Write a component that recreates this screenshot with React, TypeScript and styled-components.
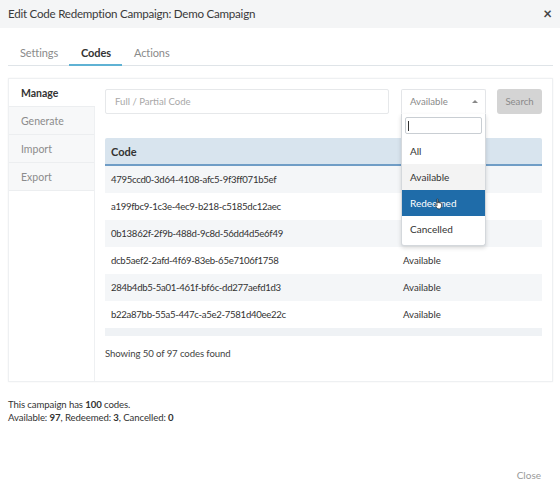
import styled, { createGlobalStyle } from "styled-components";

const GlobalStyle = createGlobalStyle`
  body {
    margin: 0;
    background: #fff;
    font-family: "Lato", "Open Sans", sans-serif;
    color: #333;
  }
`;

interface CodeRow {
  code: string;
  status: string;
}

const rows: CodeRow[] = [
  { code: "4795ccd0-3d64-4108-afc5-9f3ff071b5ef", status: "Available" },
  { code: "a199fbc9-1c3e-4ec9-b218-c5185dc12aec", status: "Available" },
  { code: "0b13862f-2f9b-488d-9c8d-56dd4d5e6f49", status: "Available" },
  { code: "dcb5aef2-2afd-4f69-83eb-65e7106f1758", status: "Available" },
  { code: "284b4db5-5a01-461f-bf6c-dd277aefd1d3", status: "Available" },
  { code: "b22a87bb-55a5-447c-a5e2-7581d40ee22c", status: "Available" },
];

const tabs = ["Settings", "Codes", "Actions"];
const sideItems = ["Manage", "Generate", "Import", "Export"];
const options = ["All", "Available", "Redeemed", "Cancelled"];

// the mouse pointer resting on the highlighted option
const HandCursor = () => (
  <svg width="9" height="12" viewBox="0 0 9 12">
    <path
      d="M3 1.2c0-.6.9-.6.9 0V5l.3-1c.2-.5.9-.4.9.1v1l.3-.7c.2-.5.9-.4.9.1v.9l.3-.4c.3-.4.9-.2.9.3V8c0 1.6-1 3-2.6 3H5C3.9 11 3.3 10.4 2.7 9.6L1.2 7.4c-.4-.5.3-1.1.8-.6L3 7.8z"
      fill="#fff"
      stroke="#222"
      strokeWidth="0.7"
      strokeLinejoin="round"
    />
  </svg>
);

const App = () => {
  return (
    <>
      <GlobalStyle />
      <Modal>
        <Header>
          <Title>Edit Code Redemption Campaign: Demo Campaign</Title>
          <CloseX>×</CloseX>
        </Header>
        <Body>
          <Tabs>
            {tabs.map((t) => (
              <Tab key={t} active={t === "Codes"}>
                {t}
              </Tab>
            ))}
          </Tabs>
          <Panel>
            <Sidebar>
              {sideItems.map((s) => (
                <SideItem key={s} active={s === "Manage"}>
                  {s}
                </SideItem>
              ))}
            </Sidebar>
            <Content>
              <SearchRow>
                <CodeInput placeholder="Full / Partial Code" />
                <SelectWrap>
                  <SelectBox>
                    <span>Available</span>
                    <Caret />
                  </SelectBox>
                  <Dropdown>
                    <DropSearch>
                      <TextCursor />
                    </DropSearch>
                    {options.map((o) => (
                      <Option
                        key={o}
                        hover={o === "Available"}
                        selected={o === "Redeemed"}
                      >
                        {o}
                        {o === "Redeemed" && (
                          <Pointer>
                            <HandCursor />
                          </Pointer>
                        )}
                      </Option>
                    ))}
                  </Dropdown>
                </SelectWrap>
                <SearchButton>Search</SearchButton>
              </SearchRow>
              <Table>
                <HeadRow>
                  <CodeCell>Code</CodeCell>
                  <StatusCell />
                </HeadRow>
                {rows.map((r, i) => (
                  <Row key={r.code} striped={i % 2 === 0}>
                    <CodeCell>{r.code}</CodeCell>
                    <StatusCell>{i > 2 ? r.status : ""}</StatusCell>
                  </Row>
                ))}
                <TableFoot />
              </Table>
              <Showing>Showing 50 of 97 codes found</Showing>
            </Content>
          </Panel>
          <Summary>
            <div>
              This campaign has <b>100</b> codes.
            </div>
            <div>
              Available: <b>97</b>, Redeemed: <b>3</b>, Cancelled: <b>0</b>
            </div>
          </Summary>
        </Body>
        <Footer>
          <CloseLink>Close</CloseLink>
        </Footer>
      </Modal>
    </>
  );
};

export default App;

const Modal = styled.div`
  width: 560px;
  height: 491px;
  display: flex;
  flex-direction: column;
  background: #fff;
`;

const Header = styled.div`
  height: 26px;
  padding: 0 8px 2px 8px;
  background: #f4f5f6;
  display: flex;
  align-items: center;
  justify-content: space-between;
`;

const Title = styled.div`
  font-size: 11.6px;
  letter-spacing: -0.25px;
  color: #3a3a3a;
`;

const CloseX = styled.div`
  font-size: 15px;
  font-weight: 700;
  color: #444;
  line-height: 1;
`;

const Body = styled.div`
  flex: 1;
  padding: 12px 7px 0 8px;
`;

const Tabs = styled.div`
  display: flex;
  height: 25px;
  border-bottom: 1px solid #dfe4e8;
`;

const Tab = styled.div<{ active?: boolean }>`
  padding: 0 11px 0 12px;
  display: flex;
  align-items: center;
  font-size: 11px;
  letter-spacing: -0.1px;
  color: ${(p) => (p.active ? "#333" : "#8a8a8a")};
  font-weight: ${(p) => (p.active ? 700 : 400)};
  border-bottom: 2px solid ${(p) => (p.active ? "#5fb2d4" : "transparent")};
  margin-bottom: -1px;
`;

const Panel = styled.div`
  margin-top: 12px;
  height: 302px;
  display: flex;
  border: 1px solid #eef0f2;
  box-shadow: 0 0 2px rgba(0, 0, 0, 0.05);
`;

const Sidebar = styled.div`
  width: 86px;
  border-right: 1px solid #eef0f2;
  display: flex;
  flex-direction: column;
`;

const SideItem = styled.div<{ active?: boolean }>`
  height: 27px;
  padding-left: 12px;
  display: flex;
  align-items: center;
  font-size: 10.5px;
  background: ${(p) => (p.active ? "#fff" : "#f7f8f9")};
  color: ${(p) => (p.active ? "#333" : "#8c8c8c")};
  font-weight: ${(p) => (p.active ? 700 : 400)};
  border-bottom: 1px solid #eceef0;
  margin-right: ${(p) => (p.active ? "-1px" : "0")};
`;

const Content = styled.div`
  flex: 1;
  padding: 10px 10px 0 10px;
`;

const SearchRow = styled.div`
  display: flex;
  align-items: center;
  height: 25px;
`;

const CodeInput = styled.input`
  box-sizing: border-box;
  width: 284px;
  height: 25px;
  border: 1px solid #e6e8ea;
  border-radius: 2px;
  padding: 0 9px;
  font-family: inherit;
  font-size: 9.6px;
  outline: none;
  &::placeholder {
    color: #a8a8a8;
  }
`;

const SelectWrap = styled.div`
  position: relative;
  margin-left: 12px;
  width: 85px;
  height: 25px;
`;

const SelectBox = styled.div`
  box-sizing: border-box;
  height: 25px;
  border: 1px solid #e3e5e8;
  border-bottom-color: transparent;
  border-radius: 2px 2px 0 0;
  padding: 0 7px 0 8px;
  display: flex;
  align-items: center;
  justify-content: space-between;
  font-size: 9.6px;
  color: #8a8a8a;
`;

const Caret = styled.span`
  width: 0;
  height: 0;
  border-left: 3px solid transparent;
  border-right: 3px solid transparent;
  border-bottom: 3px solid #888;
`;

const Dropdown = styled.div`
  position: absolute;
  top: 25px;
  left: 0;
  width: 85px;
  box-sizing: border-box;
  background: #fff;
  border: 1px solid #d4d8dc;
  border-top: none;
  border-radius: 0 0 3px 3px;
  box-shadow: 0 2px 4px rgba(0, 0, 0, 0.15);
  padding: 3px 0 3px 0;
  z-index: 2;
`;

const DropSearch = styled.div`
  box-sizing: border-box;
  height: 17px;
  margin: 0 3px 4px 3px;
  border: 1px solid #c9ced3;
  border-radius: 2px;
  display: flex;
  align-items: center;
  padding-left: 2px;
`;

const TextCursor = styled.span`
  width: 1px;
  height: 10px;
  background: #333;
`;

const Option = styled.div<{ hover?: boolean; selected?: boolean }>`
  position: relative;
  height: 26px;
  display: flex;
  align-items: center;
  padding-left: 8px;
  font-size: 10px;
  background: ${(p) => (p.selected ? "#1f6ca9" : p.hover ? "#f3f3f3" : "#fff")};
  color: ${(p) => (p.selected ? "#fff" : "#333")};
`;

const Pointer = styled.span`
  position: absolute;
  left: 32px;
  top: 8px;
  line-height: 0;
`;

const SearchButton = styled.div`
  margin-left: 11px;
  width: 45px;
  height: 25px;
  border-radius: 3px;
  background: #d4d4d4;
  color: #8a8a8a;
  font-size: 9.6px;
  display: flex;
  align-items: center;
  justify-content: center;
`;

const Table = styled.div`
  margin-top: 24px;
  display: flex;
  flex-direction: column;
`;

const HeadRow = styled.div`
  display: flex;
  height: 26px;
  align-items: center;
  background: #d8e4ee;
  border-bottom: 2px solid #6f9dc6;
  border-radius: 2px 2px 0 0;
  font-size: 11px;
  font-weight: 700;
`;

const Row = styled.div<{ striped?: boolean }>`
  display: flex;
  height: 27px;
  align-items: center;
  background: ${(p) => (p.striped ? "#f4f6f8" : "#fff")};
  font-size: 9.6px;
  letter-spacing: -0.3px;
`;

const CodeCell = styled.div`
  width: 292px;
  padding-left: 6px;
`;

const StatusCell = styled.div`
  flex: 1;
  letter-spacing: 0;
`;

const TableFoot = styled.div`
  height: 8px;
  background: #eff2f5;
`;

const Showing = styled.div`
  margin-top: 12px;
  font-size: 9.6px;
  letter-spacing: -0.1px;
  color: #444;
`;

const Summary = styled.div`
  margin-top: 16px;
  font-size: 9.6px;
  letter-spacing: -0.1px;
  line-height: 13px;
  color: #333;
`;

const Footer = styled.div`
  height: 22px;
  display: flex;
  justify-content: flex-end;
  align-items: flex-start;
  padding-right: 19px;
`;

const CloseLink = styled.div`
  font-size: 10px;
  color: #9a9a9a;
`;
